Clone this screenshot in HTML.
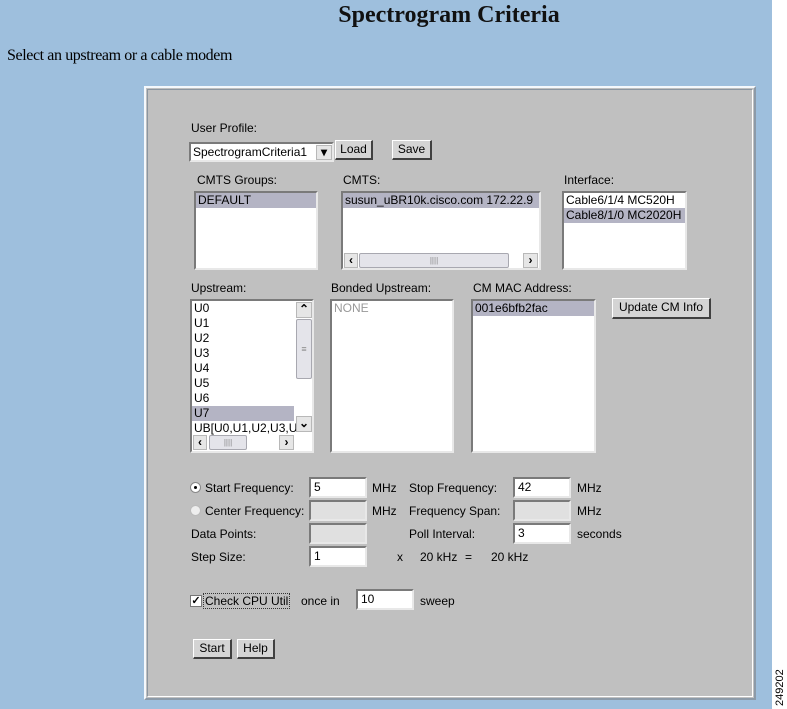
<!DOCTYPE html>
<html><head><meta charset="utf-8"><style>
*{margin:0;padding:0;box-sizing:border-box}
body{width:787px;height:709px;background:#fff;position:relative;overflow:hidden;font-family:"Liberation Sans",Arial,sans-serif;font-size:12px;color:#000}
.a{position:absolute;white-space:nowrap}
#bg{left:0;top:0;width:772px;height:709px;background:#9ebfdd}
#title{left:0;width:898px;top:2px;text-align:center;font:bold 24px "Liberation Serif",serif;color:#111}
#sub{left:7px;top:47px;font:16px "Liberation Serif",serif;letter-spacing:-0.4px}
#pan{left:144px;top:86px;width:612px;height:614px;border:2px solid #f4f8fc;border-right-color:#8c9aa8;border-bottom-color:#8c9aa8;background:#c0c0c0}
#panin{left:147px;top:89px;width:606px;height:608px;border:1px solid #8a95a0;border-right-color:#fff;border-bottom-color:#fff}
.lst{position:absolute;background:#fff;border:2px solid #7a7a7a;border-right-color:#e8e8e8;border-bottom-color:#e8e8e8;overflow:hidden}
.it{height:15px;line-height:15px;padding-left:2px}
.sel{background:#b4b4c4}
.btn{position:absolute;background:#d4d4d4;border:1px solid #fff;border-right:2px solid #404040;border-bottom:2px solid #404040;text-align:center;line-height:16px}
.inp{position:absolute;height:21px;background:#fff;border:2px solid #7a7a7a;border-right-color:#e8e8e8;border-bottom-color:#e8e8e8;padding-left:3px;line-height:16px}
.dis{background:#e0e0e0}
.sb{position:absolute;background:#e6e6e6;border:1px solid #b8b8b8;font-size:12px;font-weight:bold;text-align:center;line-height:13px}
.th{position:absolute;background:#e4e4ea;border:1px solid #a8a8b0;border-radius:2px}
</style></head><body>
<div class="a" id="bg"></div>
<div class="a" id="title">Spectrogram Criteria</div>
<div class="a" id="sub">Select an upstream or a cable modem</div>
<div class="a" style="left:774px;top:706px;transform:rotate(-90deg);transform-origin:0 0;font-size:11px">249202</div>
<div class="a" id="pan"></div>
<div class="a" id="panin"></div>

<div class="a" style="left:191px;top:121px">User Profile:</div>
<div class="inp" style="left:189px;top:142px;width:145px;height:20px;padding-left:2px">SpectrogramCriteria1</div>
<div class="sb" style="left:316px;top:145px;width:16px;height:15px;line-height:13px">&#9662;</div>
<div class="btn" style="left:335px;top:140px;width:38px;height:20px">Load</div>
<div class="btn" style="left:392px;top:140px;width:40px;height:20px">Save</div>

<div class="a" style="left:197px;top:173px">CMTS Groups:</div>
<div class="lst" style="left:194px;top:191px;width:124px;height:79px"><div class="it sel" style="width:120px">DEFAULT</div></div>
<div class="a" style="left:343px;top:173px">CMTS:</div>
<div class="lst" style="left:341px;top:191px;width:200px;height:79px"><div class="it sel">susun_uBR10k.cisco.com 172.22.9</div>
<div class="sb" style="left:1px;top:60px;width:14px;height:15px">&lsaquo;</div>
<div class="th" style="left:16px;top:60px;width:150px;height:15px;font-size:8px;text-align:center;line-height:13px;color:#888">||||</div>
<div class="sb" style="left:180px;top:60px;width:15px;height:15px">&rsaquo;</div></div>
<div class="a" style="left:564px;top:173px">Interface:</div>
<div class="lst" style="left:562px;top:191px;width:125px;height:79px"><div class="it">Cable6/1/4 MC520H</div><div class="it sel">Cable8/1/0 MC2020H</div></div>

<div class="a" style="left:191px;top:281px">Upstream:</div>
<div class="lst" style="left:190px;top:299px;width:124px;height:154px">
<div class="it">U0</div><div class="it">U1</div><div class="it">U2</div><div class="it">U3</div><div class="it">U4</div><div class="it">U5</div><div class="it">U6</div><div class="it sel" style="width:102px">U7</div><div class="it" style="width:104px;overflow:hidden">UB[U0,U1,U2,U3,U</div>
<div class="sb" style="left:104px;top:1px;width:16px;height:16px">&#8963;</div>
<div class="th" style="left:104px;top:18px;width:16px;height:60px;font-size:9px;text-align:center;line-height:58px;color:#888">&#8801;</div>
<div class="sb" style="left:104px;top:115px;width:16px;height:16px">&#8964;</div>
<div class="sb" style="left:1px;top:134px;width:14px;height:15px">&lsaquo;</div>
<div class="th" style="left:17px;top:134px;width:38px;height:15px;font-size:8px;text-align:center;line-height:13px;color:#888">||||</div>
<div class="sb" style="left:87px;top:134px;width:15px;height:15px">&rsaquo;</div></div>
<div class="a" style="left:331px;top:281px">Bonded Upstream:</div>
<div class="lst" style="left:330px;top:299px;width:124px;height:154px"><div class="it" style="color:#999">NONE</div></div>
<div class="a" style="left:473px;top:281px">CM MAC Address:</div>
<div class="lst" style="left:471px;top:299px;width:125px;height:154px"><div class="it sel">001e6bfb2fac</div></div>
<div class="btn" style="left:612px;top:298px;width:99px;height:21px">Update CM Info</div>

<div class="a" style="left:190px;top:482px;width:11px;height:11px;border-radius:50%;background:#fff;border:1px solid #888"><div style="position:absolute;left:3px;top:3px;width:3px;height:3px;background:#000;border-radius:50%"></div></div>
<div class="a" style="left:205px;top:481px">Start Frequency:</div>
<div class="inp" style="left:309px;top:477px;width:58px">5</div>
<div class="a" style="left:372px;top:481px">MHz</div>
<div class="a" style="left:409px;top:481px">Stop Frequency:</div>
<div class="inp" style="left:513px;top:477px;width:58px">42</div>
<div class="a" style="left:577px;top:481px">MHz</div>

<div class="a" style="left:190px;top:505px;width:11px;height:11px;border-radius:50%;background:#eee;border:1px solid #bbb"></div>
<div class="a" style="left:205px;top:504px">Center Frequency:</div>
<div class="inp dis" style="left:309px;top:500px;width:58px"></div>
<div class="a" style="left:372px;top:504px">MHz</div>
<div class="a" style="left:409px;top:504px">Frequency Span:</div>
<div class="inp dis" style="left:513px;top:500px;width:58px"></div>
<div class="a" style="left:577px;top:504px">MHz</div>

<div class="a" style="left:191px;top:527px">Data Points:</div>
<div class="inp dis" style="left:309px;top:523px;width:58px"></div>
<div class="a" style="left:409px;top:527px">Poll Interval:</div>
<div class="inp" style="left:513px;top:523px;width:58px">3</div>
<div class="a" style="left:577px;top:527px">seconds</div>

<div class="a" style="left:191px;top:550px">Step Size:</div>
<div class="inp" style="left:309px;top:546px;width:58px">1</div>
<div class="a" style="left:397px;top:550px">x</div>
<div class="a" style="left:420px;top:550px">20 kHz</div>
<div class="a" style="left:465px;top:550px">=</div>
<div class="a" style="left:491px;top:550px">20 kHz</div>

<div class="a" style="left:190px;top:595px;width:12px;height:12px;background:#fff;border:1px solid #777;font-size:11px;line-height:10px;text-align:center;font-weight:bold">&#10003;</div>
<div class="a" style="left:203px;top:593px;border:1px dotted #333;padding:0 1px;line-height:14px">Check CPU Util</div>
<div class="a" style="left:301px;top:594px">once in</div>
<div class="inp" style="left:356px;top:589px;width:58px">10</div>
<div class="a" style="left:420px;top:594px">sweep</div>

<div class="btn" style="left:193px;top:639px;width:39px;height:20px">Start</div>
<div class="btn" style="left:237px;top:639px;width:38px;height:20px">Help</div>
</body></html>
